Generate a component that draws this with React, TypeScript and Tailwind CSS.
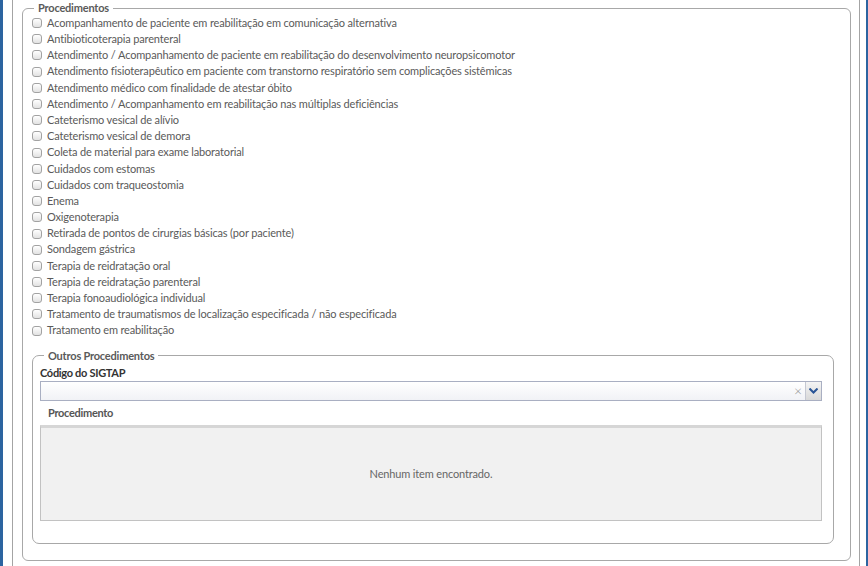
import React from 'react';

const procedimentos = [
  'Acompanhamento de paciente em reabilitação em comunicação alternativa',
  'Antibioticoterapia parenteral',
  'Atendimento / Acompanhamento de paciente em reabilitação do desenvolvimento neuropsicomotor',
  'Atendimento fisioterapêutico em paciente com transtorno respiratório sem complicações sistêmicas',
  'Atendimento médico com finalidade de atestar óbito',
  'Atendimento / Acompanhamento em reabilitação nas múltiplas deficiências',
  'Cateterismo vesical de alívio',
  'Cateterismo vesical de demora',
  'Coleta de material para exame laboratorial',
  'Cuidados com estomas',
  'Cuidados com traqueostomia',
  'Enema',
  'Oxigenoterapia',
  'Retirada de pontos de cirurgias básicas (por paciente)',
  'Sondagem gástrica',
  'Terapia de reidratação oral',
  'Terapia de reidratação parenteral',
  'Terapia fonoaudiológica individual',
  'Tratamento de traumatismos de localização especificada / não especificada',
  'Tratamento em reabilitação',
];

const CheckRow = ({ label }: { label: string }) => (
  <label className="flex items-center h-[16.2px] cursor-pointer">
    <span className="w-[10px] h-[10px] shrink-0 rounded-[3px] border border-[#a2a2a2] bg-gradient-to-b from-white to-[#e2e2e2]"></span>
    <span className="ml-[5px] text-[11px] tracking-[-0.15px] text-[#5a5a5a] whitespace-nowrap">{label}</span>
  </label>
);

export default function App() {
  return (
    <div className="flex h-[566px] overflow-hidden bg-white font-['Lato','Liberation_Sans',sans-serif]">
      {/* left accent */}
      <div className="w-[3px] bg-[#2c64a0] shrink-0"></div>

      <div className="flex-1 pl-[9px] pr-[6px]">
        <div className="h-full border-x border-[#a4a4a4] pl-[9px] pr-[8px]">
          {/* Procedimentos */}
          <fieldset className="border border-[#a8a8a8] rounded-[6px] pl-[9px] pr-[16px] pb-[16px]">
            <legend className="ml-0.5 px-1 text-[11px] leading-[16px] font-bold tracking-[-0.2px] text-[#5a5a5a]">Procedimentos</legend>

            <div className="flex flex-col -mt-[1px]">
              {procedimentos.map((p) => (
                <CheckRow key={p} label={p} />
              ))}
            </div>

            {/* Outros Procedimentos */}
            <fieldset className="mt-[9px] border border-[#a8a8a8] rounded-[7px] pl-[7px] pr-[11px] pb-[22px]">
              <legend className="ml-1 px-1 text-[11px] leading-[16px] font-bold tracking-[-0.2px] text-[#5a5a5a]">Outros Procedimentos</legend>

              <div className="text-[11px] leading-[16px] font-bold tracking-[-0.3px] text-[#333] mt-[1px]">Código do SIGTAP</div>

              <div className="flex h-[20px] border border-[#a9afc2] bg-gradient-to-b from-white to-[#f1f2f6]">
                <input className="flex-1 min-w-0 outline-none bg-transparent text-[12px] px-1" />
                <span className="w-[14px] flex items-center justify-center text-[#8a8a8a] text-[14px] leading-none font-light">×</span>
                <span className="w-[16px] flex items-center justify-center border-l border-[#c5c8d2] bg-gradient-to-b from-[#f4f4f4] to-[#d8d8d8]">
                  <svg width="9" height="6" viewBox="0 0 9 6">
                    <path d="M0.5 0.5 L4.5 4.5 L8.5 0.5" fill="none" stroke="#2a5596" strokeWidth="2" />
                  </svg>
                </span>
              </div>

              <div className="pl-[8px] pt-[4px] pb-[4px] text-[11px] leading-[16px] font-bold tracking-[-0.3px] text-[#555]">Procedimento</div>

              <div className="h-[96px] flex items-center justify-center bg-[#f1f1f1] border border-[#c2c2c2] border-t-[3px] border-t-[#d6d6d6]">
                <span className="text-[11px] tracking-[-0.15px] text-[#666]">Nenhum item encontrado.</span>
              </div>
            </fieldset>
          </fieldset>
        </div>
      </div>

      {/* right accent */}
      <div className="w-[2px] bg-[#2c64a0] shrink-0"></div>
    </div>
  );
}
